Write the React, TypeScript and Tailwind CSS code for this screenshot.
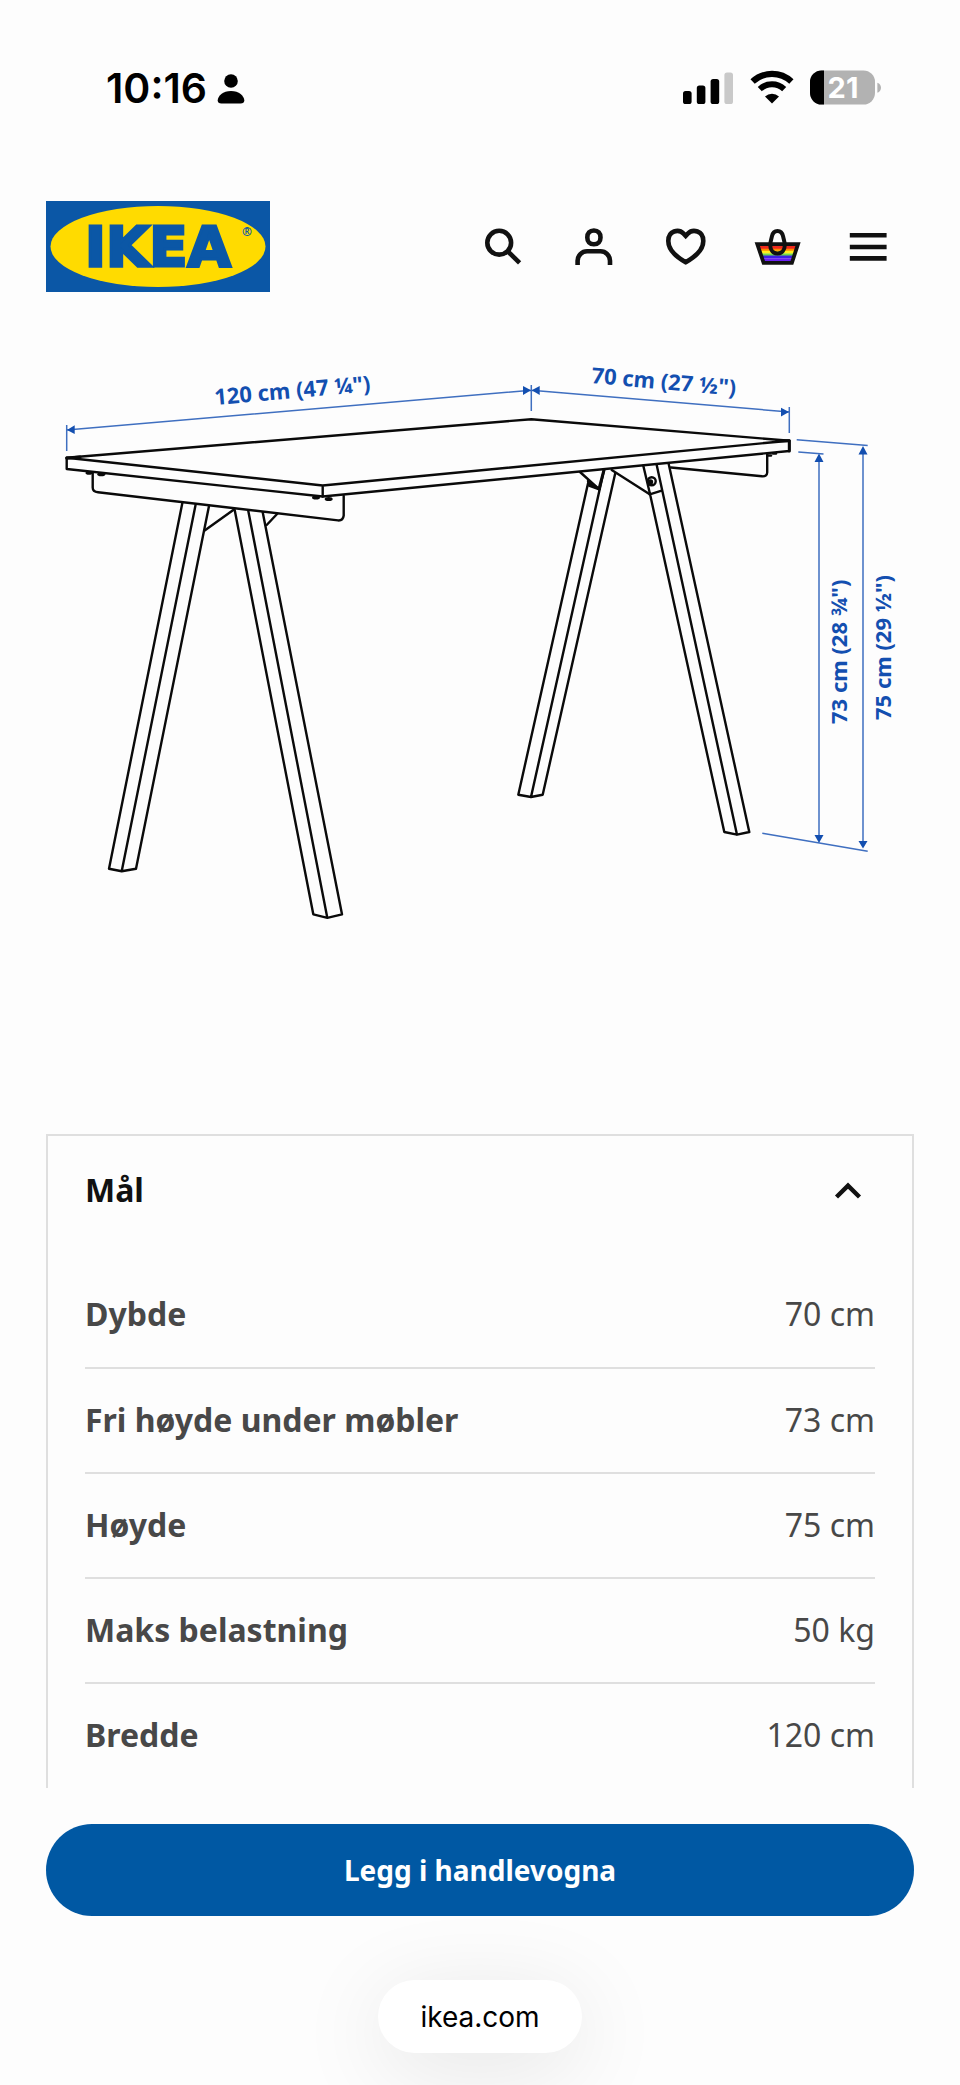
import { useState } from "react";
import type { ReactNode } from "react";

const measurements = [
  { label: "Dybde", value: "70 cm" },
  { label: "Fri høyde under møbler", value: "73 cm" },
  { label: "Høyde", value: "75 cm" },
  { label: "Maks belastning", value: "50 kg" },
  { label: "Bredde", value: "120 cm" },
];

function StatusBar() {
  return (
    <div className="flex h-10 items-center justify-between pl-[60px] pr-8 text-black">
      <div className="flex items-center gap-2.5 font-['Inter',sans-serif] text-[41px] leading-10 font-semibold">
        <span>10:16</span>
        <svg viewBox="0 0 28 31" className="h-[31px] w-7" aria-hidden="true">
          <circle cx="14" cy="8" r="6.8" />
          <path d="M4.4 30.4C2 30.4.7 29.2.7 27.4c0-4.4 5.3-9.5 13.3-9.5s13.3 5.1 13.3 9.5c0 1.8-1.3 3-3.7 3Z" />
        </svg>
      </div>
      <div className="flex items-center gap-4">
        <svg viewBox="0 0 51 36" className="h-9 w-[51px]" aria-label="Signal">
          <rect x="0" y="21" width="8.6" height="13" rx="2.6" />
          <rect x="13.8" y="15.5" width="8.6" height="18.5" rx="2.6" />
          <rect x="27.6" y="9" width="8.6" height="25" rx="2.6" />
          <rect x="41.4" y="2.4" width="8.6" height="31.6" rx="2.6" fill="#c9c9c9" />
        </svg>
        <svg viewBox="0 0 44 36" className="h-9 w-11" fill="none" stroke="#000" aria-label="Wi-Fi">
          <path d="M2.6 11.6a28.4 28.4 0 0 1 38.8 0" strokeWidth="6.2" />
          <path d="M9.8 19.1a18 18 0 0 1 24.4 0" strokeWidth="6" />
          <path d="M22 33.4 15 26.4a10.4 10.4 0 0 1 14 0Z" fill="#000" stroke="none" />
        </svg>
        <svg viewBox="0 0 72 36" className="h-9 w-[72px]" aria-label="Batteri 21 prosent">
          <rect x="0" y="0.500" width="65" height="34" rx="11.5" fill="#b2b2b2" />
          <path d="M14 .5H11.500A11.500 11.500 0 0 0 0 12v11A11.500 11.500 0 0 0 11.500 34.500H14Z" />
          <path d="M67.400 12.700c4.800 1.400 4.800 8.600 0 10Z" fill="#b2b2b2" />
          <text x="33" y="28" textAnchor="middle" fill="#fff" className="font-['Inter',sans-serif] text-[29px] font-bold">
            21
          </text>
        </svg>
      </div>
    </div>
  );
}

function Logo() {
  return (
    <a href="#" aria-label="IKEA">
      <svg viewBox="0 0 224 91" className="h-[91px] w-56">
        <rect width="224" height="91" fill="#0b57a6" />
        <ellipse cx="112" cy="45.5" rx="107.5" ry="40.5" fill="#ffdb00" />
        <text
          x="112"
          y="65"
          textAnchor="middle"
          fill="#0b57a6"
          stroke="#0b57a6"
          strokeWidth="3"
          className="font-['DejaVu_Sans',sans-serif] text-[56px] font-bold"
        >
          IKEA
        </text>
        <text x="201" y="35" textAnchor="middle" fill="#0b57a6" className="font-['Noto_Sans',sans-serif] text-[12px] font-bold">
          ®
        </text>
      </svg>
    </a>
  );
}

function IconButton({ label, children }: { label: string; children: ReactNode }) {
  return (
    <button type="button" aria-label={label} className="flex h-14 flex-1 items-center justify-center">
      <svg viewBox="0 0 56 56" className="size-14 shrink-0" fill="none" stroke="#111" strokeWidth="4.6">
        {children}
      </svg>
    </button>
  );
}

function Header() {
  return (
    <header className="mt-[93px] flex items-center justify-between">
      <Logo />
      <nav className="flex w-[458px]">
        <IconButton label="Søk">
          <circle cx="25.2" cy="23.7" r="11.9" />
          <path d="M33.6 32.2 45.6 43.8" />
        </IconButton>
        <IconButton label="Min profil">
          <path d="M28.9 11.5c4.2 0 6.6 2.8 6.6 6.9s-2.4 6.9-6.6 6.9-6.6-2.8-6.6-6.9 2.4-6.9 6.6-6.9Z" />
          <path d="M12.6 46v-4.2a9.5 9.5 0 0 1 9.5-9.5h13.4a9.5 9.5 0 0 1 9.5 9.5V46" />
        </IconButton>
        <IconButton label="Favoritter">
          <path d="M28.7 16.8 26.6 14.6C21.6 9.6 11.3 11.6 11.3 22 11.3 30.4 18 37.2 28.7 43.2 39.4 37.2 46.3 30.4 46.3 22 46.3 11.6 35.8 9.6 30.8 14.6Z" />
        </IconButton>
        <IconButton label="Handlevogn">
          <g stroke="none">
            <path d="M8.5 26h40l-1.5 4.600H10Z" fill="#f0281c" />
            <path d="M10 29.800h37l-1 2.400H11Z" fill="#ff8a00" />
            <path d="M11 31.800h35l-1 3H12Z" fill="#ffee1a" />
            <path d="M12 34.400h33l-1 2.600H13Z" fill="#6fd84a" />
            <path d="M13 36.600h31l-1 2.600H14Z" fill="#3d1fe6" />
            <path d="M14 39.200h29l-1 4H15Z" fill="#6a1ff0" />
          </g>
          <path d="M8.300 25.200H49L42.900 43.800H14.600Z" strokeWidth="3.800" />
          <path
            d="M28.500 12c3.400 0 4.900 2 5.600 5.400.7 3.400 1.700 5.800 1.700 8.700 0 4.600-2.700 8.400-7.300 8.400s-7.300-3.800-7.300-8.400c0-2.900 1-5.300 1.700-8.700.7-3.400 2.200-5.400 5.600-5.400Z"
            strokeWidth="4"
          />
        </IconButton>
        <IconButton label="Meny">
          <path d="M9.800 16.300H46.600M9.800 28H46.600M9.800 39.400H46.600" />
        </IconButton>
      </nav>
    </header>
  );
}

function TableDiagram() {
  return (
    <svg viewBox="46 340 868 620" className="mt-12 w-full" aria-label="Mål på bordet">
      <g fill="none" stroke="#0a0a0a" strokeWidth="2.400" strokeLinejoin="round" strokeLinecap="round">
        {/* table top */}
        <path d="M66.700 457.700 531.300 419.200 789.300 440.700V451L322.700 496.500 66.700 469Z" />
        <path d="M66.700 457.700 322.700 485.500 789.300 440.700M322.700 485.500V496.500" />
        <path d="M66.700 458.200 80 457M777 440.800H789.300V451" strokeWidth="3" />
        {/* left rail */}
        <path d="M92.700 473V487.500Q92.700 491.700 98 492.300L338 520.400Q343 520.800 343.700 515.500V496" />
        {/* left trestle */}
        <path d="M182.300 503.300 109 868.700 121.700 871.300 136 868.700 209 506M195.700 504.300 121.700 871.300" />
        <path d="M234.700 510 313.300 914.300 327.300 917.800 342 914.300 262.700 512.300M248.300 511 327.300 917.800" />
        <path d="M205 530.300 233.300 510M266.700 525 277.300 513.700" />
        {/* right trestle */}
        <path d="M588 483.500 518.300 794.700 531 797 542.700 794.700 615.300 473M604 470 531 797" />
        <path d="M580 472 599.300 489.300M611.700 470 649.300 494" />
        <path d="M643.300 465.700 650 494 724.300 832 737 834.700 749.300 832 668.700 464M656.700 465 737 834.700M649.700 494.300 661.700 490.700" />
        <path d="M604 470 599 489" strokeWidth="3" />
        <path d="M588 481 599.300 489.300 589 485.500Z" fill="#0a0a0a" />
        <circle cx="651.700" cy="481.300" r="4" />
        <circle cx="650.500" cy="482" r="1.500" fill="#0a0a0a" />
        {/* right rail */}
        <path d="M671 467.500 762 476.300Q767 476.700 767.200 472.500V454" />
        <path d="M768 455.500H771M773 453.500H776" strokeWidth="2.600" />
      </g>
      <g fill="#0a0a0a">
        <ellipse cx="89" cy="473" rx="3.500" ry="1.800" />
        <ellipse cx="101.300" cy="474.300" rx="4" ry="2" />
        <ellipse cx="316" cy="497.500" rx="4" ry="2" />
        <ellipse cx="328.700" cy="499" rx="4" ry="2" />
      </g>
      <g fill="none" stroke="#3f6fc0" strokeWidth="1.500">
        <path d="M66.700 425V451M66.700 430 531.300 390.300M531.300 385V411M531.300 390.300 789.300 412M789.300 407V433" />
        <path d="M796.700 439.700 867.700 445.500M798.300 452 823.500 454M819 456V841M863 448V846M762.300 833.300 867.700 851.300" />
      </g>
      <g fill="#134fb0">
        <path d="M67 430 74.700 425.300V434ZM531 390.300 523 386V395ZM531.700 390.300 539.700 386V395ZM789 412 781 407.700V416.500Z" />
        <path d="M819 453.500 814.500 462H823.500ZM819 843 814.500 835H823.500ZM863 446 858.500 454.500H867.500ZM863 848.500 858.500 841H867.500Z" />
      </g>
      <g fill="#134fb0" className="font-['Noto_Sans',sans-serif] text-[22px] font-bold">
        <text transform="translate(215 405) rotate(-5)">120 cm (47 ¼")</text>
        <text transform="translate(591 383) rotate(5)">70 cm (27 ½")</text>
        <text transform="translate(847 724) rotate(-90)">73 cm (28 ¾")</text>
        <text transform="translate(891 720) rotate(-90)">75 cm (29 ½")</text>
      </g>
    </svg>
  );
}

function Measurements() {
  const [open, setOpen] = useState(true);
  return (
    <section className="mt-[174px] border-2 border-b-0 border-[#dfdfdf] px-[37px] text-[32px] leading-[48px]">
      <h2>
        <button
          type="button"
          aria-expanded={open}
          aria-controls="measurements"
          onClick={() => setOpen(!open)}
          className="flex h-[108px] w-full items-center justify-between pr-[11px] font-bold text-[#111]"
        >
          Mål
          <svg viewBox="0 0 32 32" className="size-8" fill="none" stroke="#111" strokeWidth="4.400" aria-hidden="true">
            <path d="M4.500 23 16 11.700 27.500 23" />
          </svg>
        </button>
      </h2>
      {open && (
        <table id="measurements" className="mt-[19px] w-full border-collapse text-[#484848]">
          <tbody>
            {measurements.map((m) => (
              <tr key={m.label} className="h-[105px] border-b-2 border-[#dfdfdf] last:border-b-0">
                <th scope="row" className="p-0 pb-0.5 text-left font-bold">
                  {m.label}
                </th>
                <td className="p-0 pb-0.5 text-right">{m.value}</td>
              </tr>
            ))}
          </tbody>
        </table>
      )}
    </section>
  );
}

export default function App() {
  return (
    <div className="min-h-screen overflow-hidden bg-[#fdfdfd] px-[46px] pt-[68px] pb-8 font-['Noto_Sans',sans-serif]">
      <StatusBar />
      <Header />
      <main>
        <TableDiagram />
        <Measurements />
        <button
          type="button"
          className="mt-9 h-[92px] w-full rounded-full bg-[#0058a3] text-[28px] leading-10 font-bold text-white"
        >
          Legg i handlevogna
        </button>
      </main>
      <footer className="mt-16 flex justify-center">
        <a
          href="#"
          className="flex h-[73px] items-center rounded-full bg-white px-[42px] font-['Inter',sans-serif] text-[28px] leading-9 text-black shadow-[0_16px_90px_rgba(0,0,0,0.1)]"
        >
          ikea.com
        </a>
      </footer>
    </div>
  );
}
